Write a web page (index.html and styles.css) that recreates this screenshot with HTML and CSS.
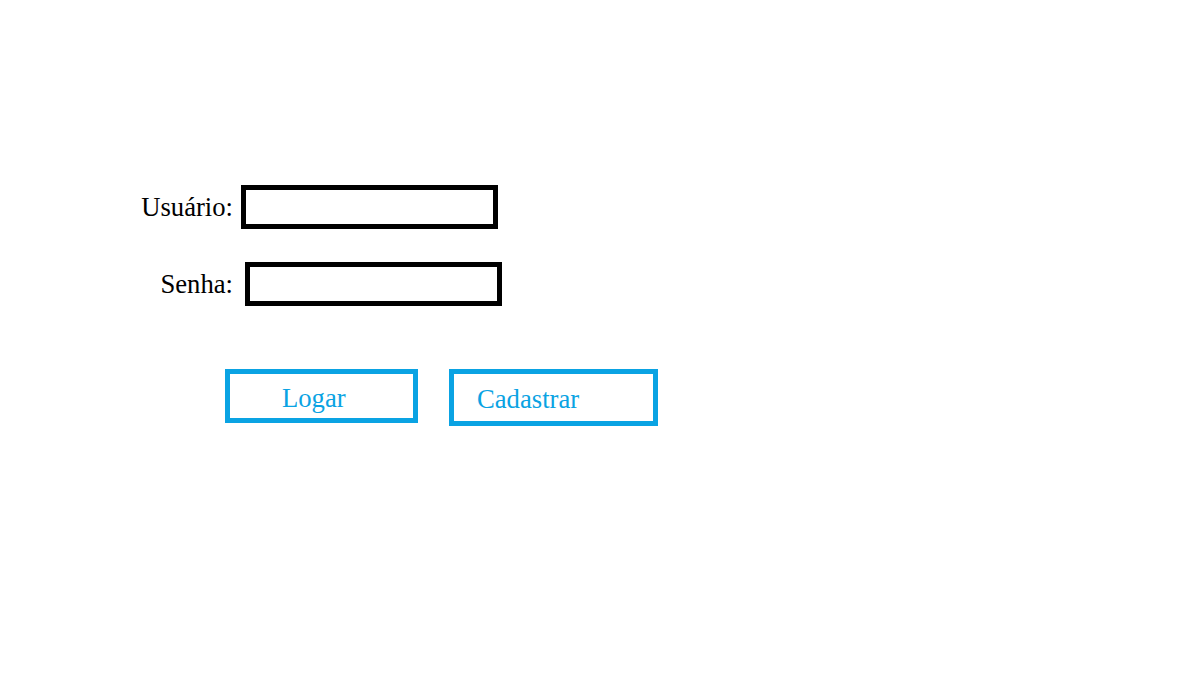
FILE: index.html
```html
<!DOCTYPE html>
<html lang="pt">
<head>
<meta charset="utf-8">
<title>Login</title>
<link rel="stylesheet" href="styles.css">
</head>
<body>
<form class="login">
  <div class="row">
    <label class="label" for="user">Usuário:</label>
    <input class="field field-user" id="user" type="text">
  </div>
  <div class="row row-pass">
    <label class="label" for="pass">Senha:</label>
    <input class="field field-pass" id="pass" type="password">
  </div>
  <div class="actions">
    <button type="button" class="btn btn-login">Logar</button>
    <button type="button" class="btn btn-register">Cadastrar</button>
  </div>
</form>
</body>
</html>
```
FILE: styles.css
```css
html, body {
  margin: 0;
  padding: 0;
  background: #ffffff;
}

body {
  font-family: "Liberation Serif", "Times New Roman", serif;
  font-size: 26.67px;
  color: #000000;
}

.login {
  padding-top: 185px;
}

.row {
  display: flex;
  align-items: center;
  height: 44px;
}

.row-pass {
  margin-top: 33px;
}

.label {
  width: 233px;
  text-align: right;
  line-height: 1;
}

.field {
  box-sizing: border-box;
  height: 44px;
  width: 257px;
  border: 5px solid #000000;
  background: #ffffff;
  margin: 0;
  padding: 0 6px;
  font: inherit;
  outline: none;
}

.field-user {
  margin-left: 8px;
}

.field-pass {
  margin-left: 12px;
}

.actions {
  display: flex;
  align-items: flex-start;
  margin-top: 63px;
  padding-left: 225px;
}

.btn {
  box-sizing: border-box;
  border: 5px solid #0aa3e3;
  background: #ffffff;
  color: #0aa3e3;
  font-family: "Liberation Serif", "Times New Roman", serif;
  font-size: 26.67px;
  line-height: 1;
  text-align: left;
  margin: 0;
  cursor: pointer;
}

.btn-login {
  width: 193px;
  height: 54px;
  padding-top: 6px;
  padding-left: 52px;
}

.btn-register {
  width: 209px;
  height: 57px;
  margin-left: 31px;
  padding-top: 4px;
  padding-left: 23px;
}
```
